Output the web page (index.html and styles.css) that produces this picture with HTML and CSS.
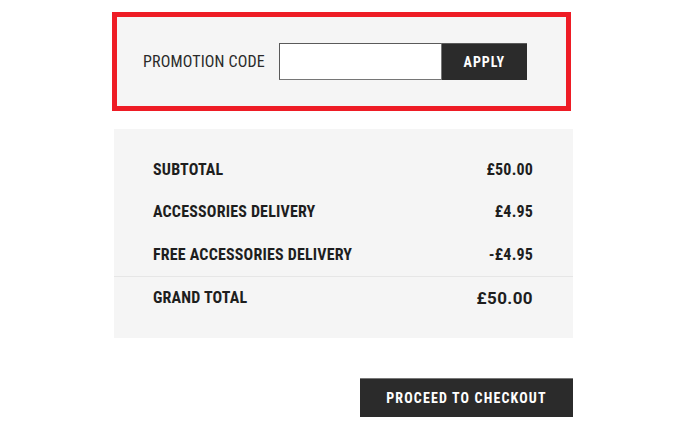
FILE: index.html
```html
<!DOCTYPE html>
<html>
<head>
<meta charset="utf-8">
<link rel="stylesheet" href="styles.css">
</head>
<body>
<div class="page">
  <div class="promo">
    <span class="promo-label">PROMOTION CODE</span>
    <div class="promo-field">
      <input class="promo-input" type="text">
      <button class="promo-apply">APPLY</button>
    </div>
  </div>
  <div class="summary">
    <div class="row"><span>SUBTOTAL</span><span>£50.00</span></div>
    <div class="row"><span>ACCESSORIES DELIVERY</span><span>£4.95</span></div>
    <div class="row"><span>FREE ACCESSORIES DELIVERY</span><span>-£4.95</span></div>
    <div class="row grand"><span>GRAND TOTAL</span><span class="grand-value">£50.00</span></div>
  </div>
  <div class="actions">
    <button class="checkout">PROCEED TO CHECKOUT</button>
  </div>
</div>
</body>
</html>
```

FILE: styles.css
```css
html, body {
  margin: 0;
  padding: 0;
  background: #ffffff;
}
body {
  font-family: "Roboto Condensed", "Open Sans", sans-serif;
  color: #1e1e1e;
}
.page {
  padding: 12px 0 0 112px;
  width: 461px;
}
.promo {
  box-sizing: border-box;
  width: 459px;
  height: 99px;
  border: 5px solid #ee1c25;
  background: #f5f5f5;
  display: flex;
  align-items: center;
  padding-left: 26px;
}
.promo-label {
  font-size: 16px;
  letter-spacing: 0.15px;
  color: #2a2a2a;
  margin-right: 14px;
}
.promo-field {
  display: flex;
  height: 37px;
}
.promo-input {
  box-sizing: border-box;
  width: 163px;
  height: 37px;
  margin: 0;
  border: 1px solid #767676;
  border-top-color: #5a5a5a;
  border-left-color: #5a5a5a;
  background: #fff;
  padding: 0 8px;
}
.promo-apply {
  box-sizing: border-box;
  width: 85px;
  height: 37px;
  margin: 0;
  border: 0;
  border-top: 1px solid #5a5a5a;
  background: #2b2b2b;
  color: #fff;
  font-family: "Roboto Condensed", "Open Sans", sans-serif;
  font-weight: bold;
  font-size: 14px;
  letter-spacing: 1px;
}
.summary {
  box-sizing: border-box;
  margin: 18px 0 0 2px;
  width: 459px;
  height: 209px;
  background: #f5f5f5;
  padding: 19px 0;
}
.row {
  height: 42.5px;
  display: flex;
  align-items: center;
  justify-content: space-between;
  padding: 0 40px 0 39px;
  font-size: 16px;
  font-weight: bold;
  letter-spacing: 0.18px;
}
.row.grand {
  border-top: 1px solid #e6e6e6;
}
.grand-value {
  font-family: Roboto, "Open Sans", sans-serif;
  font-size: 17px;
  letter-spacing: 0.4px;
}
.actions {
  display: flex;
  justify-content: flex-end;
  margin-top: 40px;
  padding-left: 2px;
}
.checkout {
  box-sizing: border-box;
  width: 213px;
  height: 39px;
  margin: 0;
  border: 0;
  border-top: 1px solid #777;
  background: #2b2b2b;
  color: #fff;
  font-family: "Roboto Condensed", "Open Sans", sans-serif;
  font-weight: bold;
  font-size: 14px;
  letter-spacing: 1.15px;
}
```
